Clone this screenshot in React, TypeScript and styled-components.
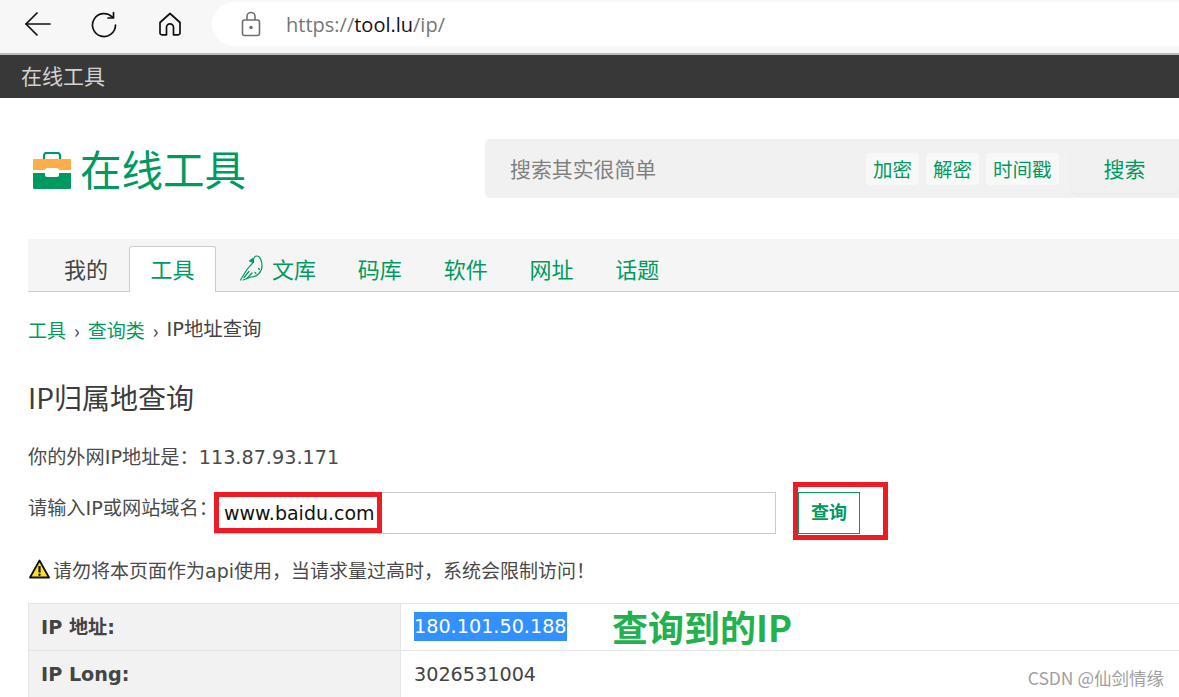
import React from 'react';
import styled, { createGlobalStyle } from 'styled-components';

const GREEN = '#009a61';
const CJK = `"Noto Sans CJK SC", sans-serif`;
const MIXED = `"DejaVu Sans", "Noto Sans CJK SC", sans-serif`;

const GlobalStyle = createGlobalStyle`
  html, body {
    margin: 0;
    padding: 0;
    background: #fff;
  }
  * { box-sizing: border-box; }
`;

const Page = styled.div`
  position: relative;
  width: 1179px;
  height: 697px;
  overflow: hidden;
  background: #fff;
  font-family: ${MIXED};
  color: #444;
`;

const BrowserBar = styled.div`
  height: 55px;
  background: #f7f7f7;
  border-bottom: 2px solid #bcbcbc;
  display: flex;
  align-items: flex-start;
  padding: 2px 0 0 24px;
`;

const NavIcon = styled.button<{ $gap: number }>`
  width: 28px;
  height: 44px;
  margin-right: ${(p) => p.$gap}px;
  padding: 0;
  border: 0;
  background: none;
  display: flex;
  align-items: center;
  justify-content: center;
`;

const AddressField = styled.div`
  flex: 1;
  height: 44px;
  background: #fff;
  border-radius: 22px 0 0 22px;
  display: flex;
  align-items: center;
  padding-left: 29px;
  gap: 25px;
  font-family: "Open Sans", sans-serif;
  font-size: 20px;
  color: #767676;
`;

const Host = styled.span`
  color: #111;
`;

const TopStrip = styled.div`
  height: 43px;
  background: #383838;
  color: #d2d2d2;
  font-family: ${CJK};
  font-size: 21px;
  line-height: 40px;
  padding-left: 21px;
`;

const Content = styled.div`
  padding-left: 28px;
`;

const Masthead = styled.div`
  height: 141px;
  display: flex;
  align-items: flex-start;
`;

const Logo = styled.div`
  width: 457px;
  padding: 42px 0 0 5px;
  display: flex;
  align-items: center;
  gap: 9px;
  color: ${GREEN};
  font-family: ${CJK};
  font-size: 41.5px;
  line-height: 56px;

  svg {
    margin-top: 6px;
  }
`;

const SearchBox = styled.div`
  flex: 1;
  margin-top: 41px;
  height: 59px;
  background: #f1f1f1;
  border-radius: 5px 0 0 5px;
  display: flex;
  align-items: center;
  padding-left: 25px;
  font-family: ${CJK};
`;

const Placeholder = styled.span`
  width: 356px;
  padding-bottom: 2px;
  font-size: 20.9px;
  color: #808080;
`;

const Chip = styled.span`
  height: 32px;
  margin-right: 7px;
  padding: 0 7px;
  background: #f8f8f8;
  border-radius: 4px;
  color: ${GREEN};
  font-size: 19.5px;
  line-height: 31px;
`;

const SearchButton = styled.span`
  margin-left: 5px;
  width: 108px;
  height: 45px;
  margin-top: 3px;
  border-radius: 0 0 6px 6px;
  box-shadow: 0 2px 2px #ebebeb;
  color: ${GREEN};
  font-size: 21px;
  line-height: 40px;
  text-align: center;
`;

const Tabs = styled.div`
  height: 53px;
  background: #f5f5f5;
  border-bottom: 1px solid #ccc;
  display: flex;
  align-items: flex-end;
  padding-left: 36px;
  font-family: ${CJK};
  font-size: 22px;
`;

const Tab = styled.span<{ $active?: boolean; $muted?: boolean }>`
  height: 46px;
  margin-bottom: -1px;
  padding: 0 ${(p) => (p.$active ? 20.5 : 0)}px 3px;
  margin-right: ${(p) => (p.$active ? 24 : 41.8)}px;
  display: flex;
  align-items: center;
  gap: 8px;
  color: ${(p) => (p.$muted ? '#444' : GREEN)};
  background: ${(p) => (p.$active ? '#fff' : 'transparent')};
  ${(p) => p.$active && 'border: 1px solid #ccc; border-bottom: 0; border-radius: 3px 3px 0 0;'}
  ${(p) => p.$muted && 'margin-right: 21px;'}
`;

const Breadcrumb = styled.div`
  margin-top: 24px;
  height: 28px;
  font-family: ${CJK};
  font-size: 19px;
  line-height: 28px;
  color: #444;
  display: flex;
  gap: 8px;
`;

const Crumb = styled.span`
  color: ${GREEN};
`;

const Current = styled.span`
  font-family: ${MIXED};
  font-size: 19.4px;
`;

const Heading = styled.h1`
  margin: 33px 0 0;
  height: 40px;
  font-family: ${CJK};
  font-weight: 400;
  font-size: 28px;
  line-height: 40px;
  color: #3c3c3c;
`;

const YourIp = styled.div`
  margin-top: 27px;
  height: 28px;
  font-size: 19.2px;
  line-height: 28px;
  color: #4a4a4a;
`;

const QueryRow = styled.div`
  position: relative;
  margin-top: 20px;
  height: 42px;
  display: flex;
  align-items: flex-start;
  font-size: 19.2px;
`;

const QueryLabel = styled.label`
  width: 186px;
  line-height: 33px;
  white-space: nowrap;
  color: #4a4a4a;
`;

const DomainInput = styled.div`
  width: 562px;
  height: 42px;
  border: 1px solid #ccc;
  padding-left: 9px;
  font-size: 19px;
  line-height: 40px;
  color: #111;
`;

const SubmitButton = styled.button`
  margin-left: 22px;
  width: 62px;
  height: 42px;
  border: 1px solid ${GREEN};
  background: #fff;
  color: ${GREEN};
  font-family: ${CJK};
  font-weight: 700;
  font-size: 18px;
  padding: 0 0 4px;
`;

const RedBox = styled.div<{ $left: number; $top: number; $w: number; $h: number }>`
  position: absolute;
  left: ${(p) => p.$left}px;
  top: ${(p) => p.$top}px;
  width: ${(p) => p.$w}px;
  height: ${(p) => p.$h}px;
  border: 5px solid #ed1c24;
`;

const Notice = styled.div`
  margin-top: 18px;
  height: 34px;
  display: flex;
  align-items: center;
  gap: 3px;
  font-size: 19px;
  white-space: nowrap;
  color: #4a4a4a;
  padding-left: 1px;
`;

const ResultTable = styled.div`
  margin-top: 17px;
  border-left: 1px solid #e4e4e4;
`;

const ResultRow = styled.div`
  height: 47px;
  display: flex;
  border-top: 1px solid #e4e4e4;
  font-size: 19.2px;
  line-height: 47px;
`;

const KeyCell = styled.div`
  width: 372px;
  background: #f2f2f2;
  border-right: 1px solid #e4e4e4;
  padding-left: 12px;
  font-weight: 700;
  color: #444;
`;

const ValueCell = styled.div`
  flex: 1;
  padding-left: 13px;
  color: #444;
`;

const Selected = styled.span`
  display: inline-block;
  height: 29px;
  margin-top: 8px;
  vertical-align: top;
  line-height: 30px;
  background: #3390ff;
  color: #fff;
`;

const Annotation = styled.span`
  position: absolute;
  left: 612px;
  top: 602px;
  font-family: ${CJK};
  font-weight: 700;
  font-size: 36px;
  line-height: 48px;
  color: #22b14c;
`;

const Watermark = styled.span`
  position: absolute;
  right: 15px;
  top: 667px;
  font-family: ${CJK};
  font-size: 17.5px;
  line-height: 22px;
  color: #a0a0a0;
`;

const BackIcon = () => (
  <svg width="28" height="28" viewBox="0 0 28 28" fill="none" stroke="#111" strokeWidth="1.7" strokeLinecap="round" strokeLinejoin="round">
    <path d="M2 14h24" />
    <path d="M13 3L2 14l11 11" />
  </svg>
);

const ReloadIcon = () => (
  <svg width="28" height="28" viewBox="0 0 28 28" fill="none" stroke="#111" strokeWidth="1.7" strokeLinecap="round" strokeLinejoin="round">
    <path d="M22.4 7.2A11.5 11.5 0 1 0 25.5 15" />
    <path d="M23.5 2.5v5.5H18" />
  </svg>
);

const HomeIcon = () => (
  <svg width="24" height="26" viewBox="0 0 24 26" fill="none" stroke="#111" strokeWidth="1.7" strokeLinejoin="round">
    <path d="M2 11.5L12 2.5l10 9v10.5a1.8 1.8 0 0 1-1.8 1.8h-4.7v-7.5a3.5 3.5 0 0 0-7 0v7.5H3.8A1.8 1.8 0 0 1 2 22z" />
  </svg>
);

const LockIcon = () => (
  <svg width="20" height="26" viewBox="0 0 20 26" fill="none" stroke="#6f6f6f" strokeWidth="1.6">
    <rect x="1.5" y="9" width="17" height="15.5" rx="2" />
    <path d="M6 9V5.5a4 4 0 0 1 8 0V9" />
    <circle cx="10" cy="16.5" r="1" fill="#6f6f6f" />
  </svg>
);

const ToolboxIcon = () => (
  <svg width="38" height="38" viewBox="0 0 38 38">
    <path d="M11 8V3.500A2.500 2.500 0 0 1 13.500 1h11A2.500 2.500 0 0 1 27 3.500V8" fill="none" stroke="#009a61" strokeWidth="2.200" />
    <rect x="0" y="7" width="38" height="11" fill="#ffad47" />
    <path d="M0 21h38v15a1 1 0 0 1-1 1H1a1 1 0 0 1-1-1z" fill="#009a61" />
    <rect x="12" y="16" width="14" height="9" rx="2" fill="#fff" />
  </svg>
);

const BirdIcon = () => (
  <svg width="24" height="26" viewBox="0 0 24 26" fill="none" stroke={GREEN} strokeWidth="1.200" strokeLinecap="round" strokeLinejoin="round">
    <path d="M0.500 25L6 16C8 12 12 10 13 7C13 3 15 1 17 1C20 1 22 6 22 11C22 17 17 22 11 22L3 25" />
    <path d="M4 22.500L9 16.500" />
    <path d="M7 23.500L12 18" />
    <path d="M13 3.500L9.500 6l4 1.500z" fill={GREEN} />
    <path d="M15 17.500l1 1M18.500 13.500l1 1" />
  </svg>
);

const WarningIcon = () => (
  <svg width="21" height="20" viewBox="0 0 21 20">
    <path d="M10.500 1.500L20 18.500H1z" fill="#f7e225" stroke="#111" strokeWidth="1.800" strokeLinejoin="round" />
    <path d="M10.500 7v6.500" stroke="#111" strokeWidth="2.200" />
    <circle cx="10.500" cy="15.800" r="1.200" fill="#111" />
  </svg>
);

const App: React.FC = () => {
  return (
    <Page>
      <GlobalStyle />
      <BrowserBar>
        <NavIcon $gap={38}><BackIcon /></NavIcon>
        <NavIcon $gap={38}><ReloadIcon /></NavIcon>
        <NavIcon $gap={28}><HomeIcon /></NavIcon>
        <AddressField>
          <LockIcon />
          <span>https://<Host>tool.lu</Host>/ip/</span>
        </AddressField>
      </BrowserBar>
      <TopStrip>在线工具</TopStrip>
      <Content>
        <Masthead>
          <Logo>
            <ToolboxIcon />
            <span>在线工具</span>
          </Logo>
          <SearchBox>
            <Placeholder>搜索其实很简单</Placeholder>
            <Chip>加密</Chip>
            <Chip>解密</Chip>
            <Chip>时间戳</Chip>
            <SearchButton>搜索</SearchButton>
          </SearchBox>
        </Masthead>
        <Tabs>
          <Tab $muted>我的</Tab>
          <Tab $active>工具</Tab>
          <Tab><BirdIcon />文库</Tab>
          <Tab>码库</Tab>
          <Tab>软件</Tab>
          <Tab>网址</Tab>
          <Tab>话题</Tab>
        </Tabs>
        <Breadcrumb>
          <Crumb>工具</Crumb>›<Crumb>查询类</Crumb>›<Current>IP地址查询</Current>
        </Breadcrumb>
        <Heading>IP归属地查询</Heading>
        <YourIp>你的外网IP地址是：113.87.93.171</YourIp>
        <QueryRow>
          <QueryLabel>请输入IP或网站域名：</QueryLabel>
          <DomainInput>www.baidu.com</DomainInput>
          <SubmitButton>查询</SubmitButton>
          <RedBox $left={186} $top={0} $w={168} $h={41} />
          <RedBox $left={765} $top={-10} $w={95} $h={58} />
        </QueryRow>
        <Notice><WarningIcon />请勿将本页面作为api使用，当请求量过高时，系统会限制访问！</Notice>
        <ResultTable>
          <ResultRow>
            <KeyCell>IP 地址:</KeyCell>
            <ValueCell><Selected>180.101.50.188</Selected></ValueCell>
          </ResultRow>
          <ResultRow>
            <KeyCell>IP Long:</KeyCell>
            <ValueCell>3026531004</ValueCell>
          </ResultRow>
        </ResultTable>
      </Content>
      <Annotation>查询到的IP</Annotation>
      <Watermark>CSDN @仙剑情缘</Watermark>
    </Page>
  );
};

export default App;
